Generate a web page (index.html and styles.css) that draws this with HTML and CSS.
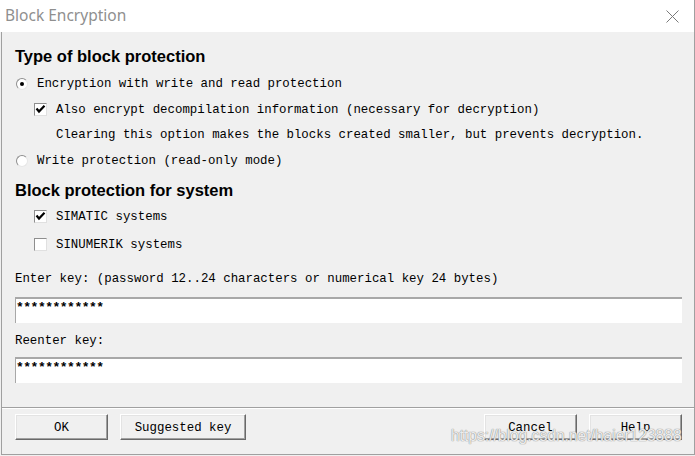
FILE: index.html
```html
<!DOCTYPE html>
<html>
<head>
<meta charset="utf-8">
<link rel="stylesheet" href="styles.css">
</head>
<body>
<div class="window">
  <div class="titlebar">
    <span class="title">Block Encryption</span>
    <svg class="close" width="13" height="13" viewBox="0 0 13 13"><path d="M0.5 0.5 L12.5 12.5 M12.5 0.5 L0.5 12.5" stroke="#7a7a7a" stroke-width="1" fill="none"/></svg>
  </div>
  <div class="content">
    <div class="body">
      <h2 class="heading heading-first">Type of block protection</h2>
      <div class="opt"><span class="radio checked"></span>Encryption with write and read protection</div>
      <div class="opt sub"><span class="check"><svg width="11" height="11" viewBox="0 0 11 11"><path d="M1.5 4.5 L4 7.5 L9.5 1.8" stroke="#000" stroke-width="2.2" fill="none"/></svg></span>Also encrypt decompilation information (necessary for decryption)</div>
      <div class="note">Clearing this option makes the blocks created smaller, but prevents decryption.</div>
      <div class="opt"><span class="radio"></span>Write protection (read-only mode)</div>
      <h2 class="heading heading-second">Block protection for system</h2>
      <div class="opt sub"><span class="check"><svg width="11" height="11" viewBox="0 0 11 11"><path d="M1.5 4.5 L4 7.5 L9.5 1.8" stroke="#000" stroke-width="2.2" fill="none"/></svg></span>SIMATIC systems</div>
      <div class="opt sub sub-gap"><span class="check"></span>SINUMERIK systems</div>
      <div class="field-label label-first">Enter key: (password 12..24 characters or numerical key 24 bytes)</div>
      <div class="input">************</div>
      <div class="field-label label-second">Reenter key:</div>
      <div class="input">************</div>
    </div>
    <div class="footer">
      <div class="btn btn-small">OK</div>
      <div class="btn btn-wide">Suggested key</div>
      <div class="spacer"></div>
      <div class="btn btn-small">Cancel</div>
      <div class="btn btn-small">Help</div>
    </div>
  </div>
  <div class="watermark">https://blog.csdn.net/haier123888</div>
</div>
</body>
</html>
```

FILE: styles.css
```css
html, body {
  margin: 0;
  padding: 0;
  background: #f0f0f0;
}
body {
  width: 695px;
  height: 456px;
  overflow: hidden;
}
.window {
  position: relative;
  width: 694px;
  height: 455px;
  border-right: 1px solid #a0a0a0;
}
.titlebar {
  height: 32px;
  background: #ffffff;
  display: flex;
  align-items: center;
  justify-content: space-between;
  padding: 0 15px 0 5px;
  box-sizing: border-box;
}
.title {
  font-family: "Noto Sans", "Open Sans", sans-serif;
  font-size: 15.5px;
  color: #8f8f8f;
  margin-top: -3px;
}
.close {
  display: block;
}
.content {
  margin-left: 1px;
  border-left: 1px solid #a0a0a0;
  border-bottom: 1px solid #a0a0a0;
  height: 422px;
  display: flex;
  flex-direction: column;
  font-family: "Liberation Mono", monospace;
  font-size: 12.4px;
  color: #000;
}
.body {
  padding: 0 12px 0 13px;
}
.heading {
  margin: 0;
  height: 24px;
  line-height: 24px;
  font-family: "Liberation Sans", Arial, sans-serif;
  font-weight: bold;
  font-size: 16.5px;
  color: #000;
}
.heading-first { margin-top: 12px; }
.heading-second { margin-top: 6px; }
.heading-first + .opt { margin-top: 1px; }
.opt {
  display: flex;
  align-items: center;
  height: 26px;
  box-sizing: border-box;
  padding-top: 3px;
  white-space: pre;
}
.note {
  height: 25px;
  box-sizing: border-box;
  padding-top: 3px;
  line-height: 22px;
  padding-left: 41px;
  white-space: pre;
}
.sub {
  padding-left: 19px;
}
.sub-gap {
  margin-top: 2px;
}
.radio {
  position: relative;
  width: 12px;
  height: 12px;
  box-sizing: border-box;
  border-radius: 50%;
  background: #fff;
  border: 1px solid;
  border-color: #8e8e8e #e6e6e6 #e6e6e6 #8e8e8e;
  margin: 0 9px 0 1px;
}
.radio.checked::after {
  content: "";
  position: absolute;
  left: 3px;
  top: 3px;
  width: 4px;
  height: 4px;
  border-radius: 50%;
  background: #000;
}
.check {
  display: flex;
  align-items: center;
  justify-content: center;
  width: 13px;
  height: 13px;
  box-sizing: border-box;
  background: #fff;
  border: 1px solid;
  border-color: #8e8e8e #e0e0e0 #e0e0e0 #8e8e8e;
  margin-right: 9px;
}
.check svg { display: block; }
.field-label {
  height: 20px;
  box-sizing: border-box;
  padding-top: 3px;
  line-height: 17px;
  white-space: pre;
}
.label-first { margin-top: 12px; }
.label-second { margin-top: 7px; }
.input {
  margin-top: 9px;
  height: 26px;
  box-sizing: border-box;
  background: #fff;
  border-top: 2px solid #a8a8a8;
  border-left: 1px solid #a8a8a8;
  padding: 0;
  line-height: 18px;
  font-size: 13px;
  font-weight: bold;
  letter-spacing: -0.5px;
}
.label-second + .input { margin-top: 7px; }
.footer {
  margin-top: 24px;
  border-top: 1px solid #a0a0a0;
  box-shadow: inset 0 1px #ffffff;
  padding: 6px 12px 0 13px;
  display: flex;
  gap: 12px;
}
.spacer { flex: 1; }
.btn {
  height: 26px;
  box-sizing: border-box;
  border: 1px solid;
  border-color: #ffffff #696969 #696969 #ffffff;
  box-shadow: inset -1px -1px #a0a0a0, inset 1px 1px #e3e3e3;
  background: #f0f0f0;
  display: flex;
  align-items: center;
  justify-content: center;
  padding-top: 2px;
  white-space: pre;
}
.btn-small { width: 93px; }
.btn-wide { width: 126px; }
.watermark {
  position: absolute;
  left: 451px;
  top: 427px;
  font-family: "Liberation Sans", Arial, sans-serif;
  font-size: 15.6px;
  color: rgba(255, 255, 255, 0.85);
  text-shadow: 0 0 1px #8a8a8a, 0 0 1px #8a8a8a;
  white-space: pre;
}
```
